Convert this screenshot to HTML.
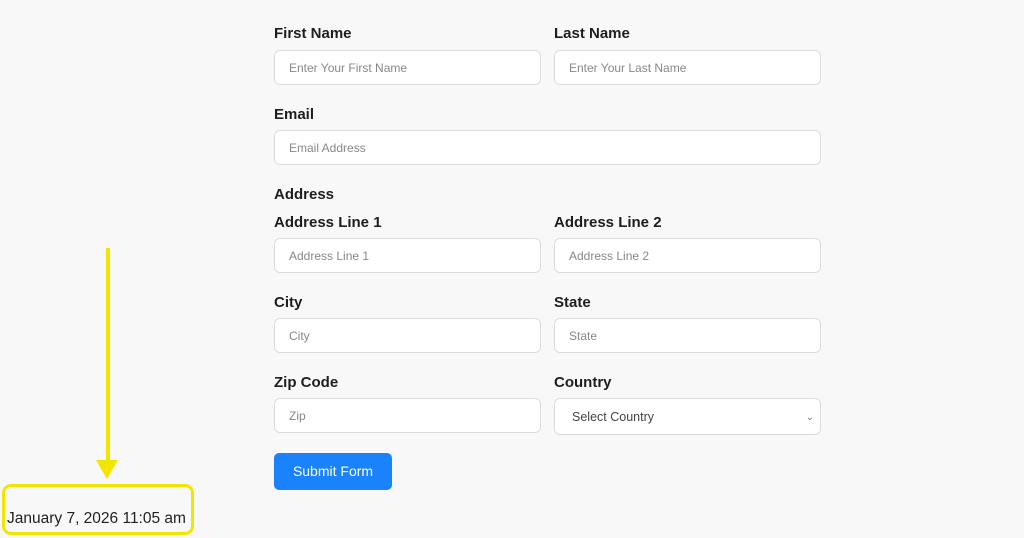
<!DOCTYPE html>
<html><head><style>
body{margin:0;width:1024px;height:538px;background:#f8f8f8;font-family:"Liberation Sans",sans-serif;position:relative;overflow:hidden}
.l{position:absolute;font-size:15px;font-weight:bold;color:#1e1e1e;line-height:18px}
.i{position:absolute;box-sizing:border-box;height:35px;background:#fff;border:1px solid #dcdcdc;border-radius:6px;font-size:12px;color:#888;padding-left:14px;line-height:34px}
</style></head><body>
<div class="l" style="left:274px;top:25px">First Name</div>
<div class="l" style="left:554px;top:25px">Last Name</div>
<div class="i" style="left:274px;top:50px;width:267px">Enter Your First Name</div>
<div class="i" style="left:554px;top:50px;width:267px">Enter Your Last Name</div>
<div class="l" style="left:274px;top:106px">Email</div>
<div class="i" style="left:274px;top:130px;width:547px">Email Address</div>
<div class="l" style="left:274px;top:186px">Address</div>
<div class="l" style="left:274px;top:214px">Address Line 1</div>
<div class="l" style="left:554px;top:214px">Address Line 2</div>
<div class="i" style="left:274px;top:238px;width:267px">Address Line 1</div>
<div class="i" style="left:554px;top:238px;width:267px">Address Line 2</div>
<div class="l" style="left:274px;top:294px">City</div>
<div class="l" style="left:554px;top:294px">State</div>
<div class="i" style="left:274px;top:318px;width:267px">City</div>
<div class="i" style="left:554px;top:318px;width:267px">State</div>
<div class="l" style="left:274px;top:374px">Zip Code</div>
<div class="l" style="left:554px;top:374px">Country</div>
<div class="i" style="left:274px;top:398px;width:267px">Zip</div>
<div class="i" style="left:554px;top:398px;width:267px;height:37px;line-height:37px;padding-left:17px;color:#444;font-size:12.5px">Select Country<span style="position:absolute;right:6px;top:0;font-size:10px;color:#777">&#8964;</span></div>
<div style="position:absolute;left:274px;top:453px;width:118px;height:37px;background:#1a82fb;border-radius:5px;color:#fff;font-size:14px;line-height:37px;text-align:center">Submit Form</div>
<div style="position:absolute;left:106px;top:248px;width:4px;height:214px;background:#f2e600"></div>
<div style="position:absolute;left:96px;top:460px;width:0;height:0;border-left:11px solid transparent;border-right:11px solid transparent;border-top:19px solid #f2e600"></div>
<div style="position:absolute;left:2px;top:484px;width:186px;height:45px;border:3px solid #f2e600;border-radius:9px"></div>
<div style="position:absolute;left:7px;top:510px;font-size:15.5px;color:#222">January 7, 2026 11:05 am</div>
</body></html>
